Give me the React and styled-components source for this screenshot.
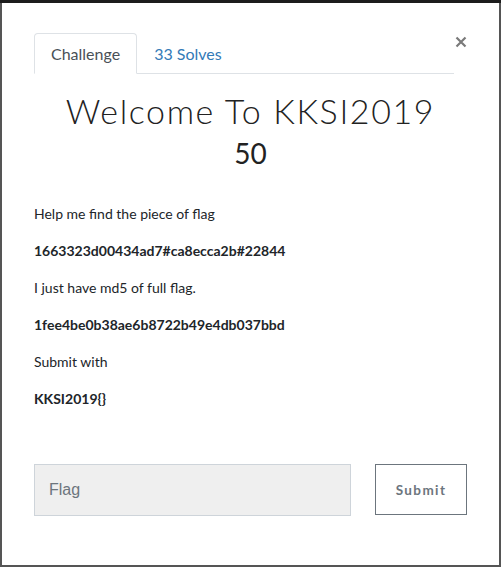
import React from 'react';
import styled, { createGlobalStyle } from 'styled-components';

const GlobalStyle = createGlobalStyle`
  html, body {
    margin: 0;
    padding: 0;
    background: #555;
  }
  body {
    font-family: 'Lato', 'Open Sans', sans-serif;
  }
`;

const Backdrop = styled.div`
  width: 501px;
  height: 567px;
  box-sizing: border-box;
  border-top: 3px solid #1c1c1c;
  padding: 0 2px 2px 2px;
  background: #555;
`;

const Modal = styled.div`
  background: #fff;
  height: 100%;
  box-sizing: border-box;
  padding: 30px 32px 0 32px;
  display: flex;
  flex-direction: column;
`;

const Header = styled.div`
  display: flex;
  align-items: flex-start;
`;

const Tabs = styled.div`
  display: flex;
  width: 420px;
  border-bottom: 1px solid #dee2e6;
`;

const Tab = styled.div`
  height: 41px;
  box-sizing: border-box;
  padding: 0 16px;
  display: flex;
  align-items: center;
  font-size: 16px;
  margin-bottom: -1px;
  color: ${(p) => (p.active ? '#495057' : '#337ab7')};
  background: ${(p) => (p.active ? '#fff' : 'transparent')};
  border: 1px solid ${(p) => (p.active ? '#dee2e6' : 'transparent')};
  border-bottom-color: ${(p) => (p.active ? '#fff' : 'transparent')};
  border-radius: 4px 4px 0 0;
`;

const Close = styled.div`
  margin-left: 1px;
  margin-top: 3px;
  width: 12px;
  height: 12px;
  display: flex;
`;

const Title = styled.h2`
  margin: 17px 0 0;
  text-align: center;
  font-family: 'Lato', sans-serif;
  font-weight: 300;
  font-size: 34px;
  letter-spacing: 1.6px;
  line-height: 40px;
  color: #222;
`;

const Points = styled.h4`
  margin: 2px 0 0;
  text-align: center;
  font-weight: 400;
  font-size: 28px;
  line-height: 40px;
  color: #222;
`;

const Description = styled.div`
  margin-top: 30px;
  font-size: 14px;
  line-height: 21px;
  color: #212529;
`;

const Para = styled.p`
  margin: 0 0 16px;
  font-weight: ${(p) => (p.bold ? 700 : 400)};
`;

const Form = styled.div`
  margin-top: 39px;
  display: flex;
  align-items: flex-start;
  gap: 24px;
`;

const FlagInput = styled.input`
  flex: 0 0 auto;
  width: 317px;
  height: 52px;
  box-sizing: border-box;
  background: #efefef;
  border: 1px solid #ced4da;
  padding: 0 14px;
  font-family: 'Liberation Sans', Arial, sans-serif;
  font-size: 16px;
  color: #495057;
  outline: none;
  &::placeholder {
    color: #6c757d;
  }
`;

const SubmitButton = styled.button`
  flex: 0 0 auto;
  width: 92px;
  height: 51px;
  box-sizing: border-box;
  background: #fff;
  border: 1px solid #6c757d;
  border-radius: 0;
  font-family: 'Lato', sans-serif;
  font-weight: 700;
  font-size: 13.5px;
  letter-spacing: 1.4px;
  color: #6c757d;
  padding: 0;
`;

export default function App() {
  return (
    <>
      <GlobalStyle />
      <Backdrop>
        <Modal>
          <Header>
            <Tabs>
              <Tab active>Challenge</Tab>
              <Tab>33 Solves</Tab>
            </Tabs>
            <Close>
              <svg width="12" height="12" viewBox="0 0 12 12">
                <path d="M1.5 1.5 L10.5 10.5 M10.5 1.5 L1.5 10.5" stroke="#7a7a7a" strokeWidth="2.2" />
              </svg>
            </Close>
          </Header>
          <Title>Welcome To KKSI2019</Title>
          <Points>50</Points>
          <Description>
            <Para>Help me find the piece of flag</Para>
            <Para bold>1663323d00434ad7#ca8ecca2b#22844</Para>
            <Para>I just have md5 of full flag.</Para>
            <Para bold>1fee4be0b38ae6b8722b49e4db037bbd</Para>
            <Para>Submit with</Para>
            <Para bold>KKSI2019{'{}'}</Para>
          </Description>
          <Form>
            <FlagInput placeholder="Flag" />
            <SubmitButton>Submit</SubmitButton>
          </Form>
        </Modal>
      </Backdrop>
    </>
  );
}
